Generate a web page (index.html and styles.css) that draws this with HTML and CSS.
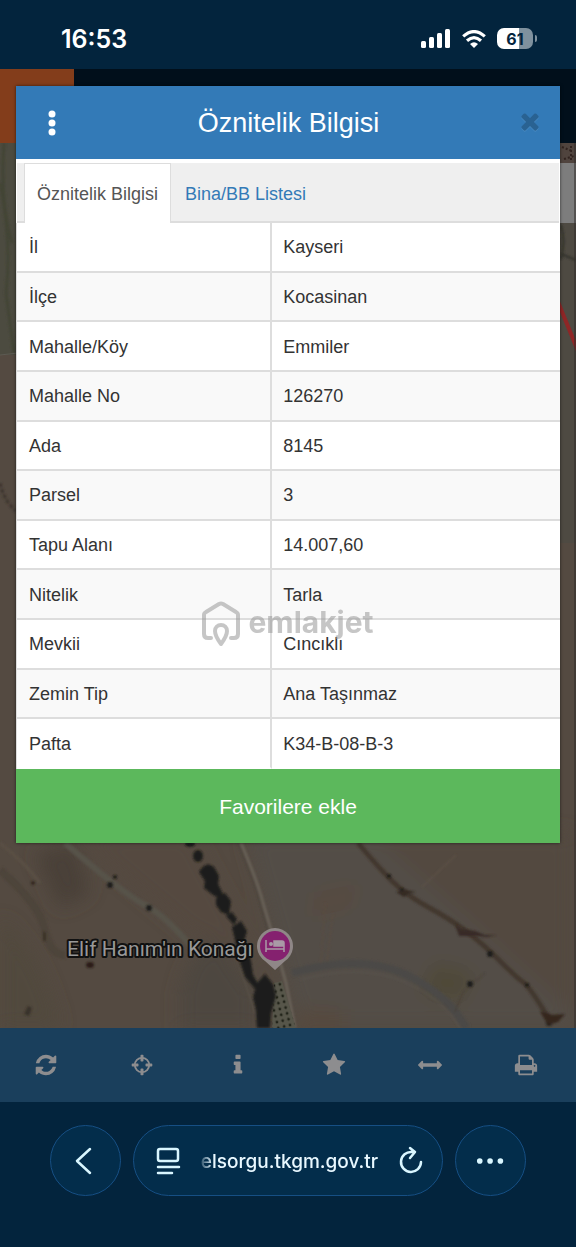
FILE: index.html
```html
<!DOCTYPE html>
<html lang="tr">
<head>
    <meta charset="UTF-8">
    <meta name="viewport" content="width=device-width, initial-scale=1.0">
    <title>Parsel Sorgu - Öznitelik Bilgisi</title>
    <link rel="stylesheet" href="styles.css">
</head>
<body>
    <div class="status-bar">
        <span class="time">16:53</span>
        <div class="status-icons">
            <svg width="30" height="20" viewBox="0 0 30 20" fill="#fff">
                <rect x="0" y="12" width="5" height="7" rx="1.5"/>
                <rect x="8" y="8" width="5" height="11" rx="1.5"/>
                <rect x="16" y="4" width="5" height="15" rx="1.5"/>
                <rect x="24" y="0" width="5" height="19" rx="1.5"/>
            </svg>
            <svg width="24" height="18" viewBox="0 0 24 18" fill="none" stroke="#fff" stroke-width="3.2">
                <path d="M1.2 6.4Q12-3.2 22.8 6.4"/>
                <path d="M5 10.8Q12 4.6 19 10.8"/>
                <path d="M12 18l-4-4Q12 10.6 16 14z" fill="#fff" stroke="none"/>
            </svg>
            <div class="battery"><span>61</span></div>
        </div>
    </div>

    <main class="page">
        <div class="site-header"><div class="site-logo"></div></div>

        <svg class="map" viewBox="0 0 576 885">
            <defs>
                <filter id="soft" x="-30%" y="-30%" width="160%" height="160%"><feGaussianBlur stdDeviation="9"/></filter>
                <filter id="edge" x="-10%" y="-10%" width="120%" height="120%"><feGaussianBlur stdDeviation="0.9"/></filter>
                <pattern id="trees" width="6" height="6" patternUnits="userSpaceOnUse" patternTransform="rotate(-14)">
                    <circle cx="2" cy="2" r="1.4" fill="#22241a"/>
                </pattern>
            </defs>
            <rect width="576" height="885" fill="#544a41"/>
            <!-- left and right strips beside the dialog -->
            <path d="M0 0h20v212H0z" fill="#4c4b40"/>
            <path d="M0 40q12 60 6 110l8 60M4 0q-4 60 8 100" stroke="#434436" stroke-width="3" fill="none" filter="url(#edge)"/>
            <path d="M0 212l18-2" stroke="#5d5a52" stroke-width="1"/>
            <path d="M0 340q4 18 16 28" stroke="#3c342d" stroke-width="3" stroke-dasharray="4 2" fill="none" filter="url(#edge)"/>
            <path d="M556 0h20v400h-20z" fill="#4e4a42"/>
            <path d="M560 0h16v24h-16z" fill="#50443e"/>
            <path d="M562 4l10 4m-8 8l10-3m-3-10v14" stroke="#31231f" stroke-width="2" stroke-dasharray="2 2"/>
            <path d="M560 20h16v60h-16z" fill="#7d7d7d"/>
            <path d="M561 82q5 16 0 34m0-5l15 6" stroke="#33332c" stroke-width="2" fill="none" filter="url(#edge)"/>
            <path d="M556 154l22 54" stroke="#8f2626" stroke-width="4"/>

            <!-- fields -->
            <g filter="url(#soft)">
                <path d="M245 690h145l130 110 60 85H300z" fill="#524d47"/>
                <path d="M372 690l90 80 110 100V690z" fill="#534840"/>
                <path d="M35 710l40-10 15 50-30 15z" fill="#4a4038"/>
                <path d="M70 690h120l70 130-70-30z" fill="#54493f"/>
                <path d="M0 775q40 30 60 110H0z" fill="#51493e"/>
                <path d="M180 850q10-50 40-50l35 50v35h-75z" fill="#4d4741"/>
                <path d="M435 820l40 10-15 30-40-10z" fill="#504a39"/>
                <path d="M315 750l45-10-10 25-40 10z" fill="#574b3f"/>
                <path d="M305 865l40 5v15h-50z" fill="#564a3e"/>
            </g>
            <g fill="none" filter="url(#edge)">
                <path d="M0 727q40 35 45 60t20 25" stroke="#4d443a" stroke-width="8"/>
                <path d="M0 700q25 20 40 40" stroke="#5a5045" stroke-width="3"/>
                <path d="M65 700q60 52 80 62t52 48" stroke="#57524a" stroke-width="6"/>
                <path d="M241 700q17 40 22 60l9 30 14 50 9 45" stroke="#686057" stroke-width="3"/>
                <path d="M238 700q17 40 22 60l9 30" stroke="#443d36" stroke-width="1"/>
                <path d="M292 830q70-20 115 2 40 20 56 48l4 5" stroke="#4b4a46" stroke-width="8"/>
                <path d="M300 837q60-17 105 2 40 18 55 46" stroke="#5a554e" stroke-width="1"/>
                <path d="M358 700q20 24 34 38t36 26 38 24 33 29 24 22 26 37" stroke="#43372f" stroke-width="5"/>
                <path d="M422 744l34-32" stroke="#64584d" stroke-width="1"/>
                <path d="M485 830l-22 19-8 20" stroke="#463c33" stroke-width="1"/>
                <path d="M325 760l-4 60M333 770l-6 48" stroke="#5b4c40" stroke-width="1"/>
                <path d="M240 825l15 45" stroke="#5a534a" stroke-width="1"/>
            </g>
            <path d="M274 840l8-2 14 47h-24z" fill="#57564a"/>
            <path d="M274 840l8-2 14 47h-24z" fill="url(#trees)"/>
            <g fill="#1e1f1a" filter="url(#edge)">
                <ellipse cx="190" cy="701" rx="5" ry="3"/>
                <ellipse cx="198" cy="713" rx="5" ry="6"/>
                <path d="M199 729q7-12 15-5l5 9-1 8 5 10-2 5-8-4-9-7 1-7z"/>
                <path d="M216 755l9-5 6 8-2 14-8-3-5-7z"/>
                <path d="M226 773l6-4 5 7-3 6z"/>
                <path d="M232 784l9-6 6 10-3 10 6 14 3 20 7 12-5 2-10-12-5-15-5-22z"/>
                <path d="M257 840l8-9 8 10 3 12-5 17-1 15h-13l-1-18-3-13z"/>
                <circle cx="110" cy="742" r="3"/><circle cx="115" cy="734" r="2"/>
                <circle cx="149" cy="765" r="3"/><ellipse cx="90" cy="822" rx="4" ry="3" fill="#2c1c16"/>
                <circle cx="33" cy="740" r="2" fill="#302820"/>
                <path d="M43 788l3 2v8h-3z" fill="#3a3028"/>
                <path d="M28 863l4 2-3 8-5-2z" fill="#383229"/>
                <circle cx="389" cy="733" r="2"/><circle cx="402" cy="747" r="2"/>
                <path d="M396 749l9-2 11 2-8 2-4 3z" fill="#352a24"/>
                <path d="M455 781l6 5 14 2 10 4h12l-10 2-10-1-18 0z" fill="#372c25"/>
                <circle cx="490" cy="811" r="3"/><circle cx="470" cy="841" r="3"/>
                <circle cx="527" cy="842" r="2"/><circle cx="549" cy="880" r="3"/>
                <path d="M540 868l12 4 13-1-7 8-10 3z" fill="#35271f"/>
            </g>
            <path d="M575 0v885" stroke="#2e2b28" stroke-width="1"/>
            <!-- place marker -->
            <path d="M275 827l-10-9a18 18 0 1 1 20 0z" fill="#8f8787"/>
            <circle cx="275" cy="803" r="15" fill="#85216f"/>
            <path d="M266 797v12M266 806h18M284 809v-6M274 803h10v-3q0-2-2-2h-8z" stroke="#a99aa6" stroke-width="1.5" fill="#a99aa6"/>
            <circle cx="271" cy="801" r="2" fill="#a99aa6"/>
            <text class="place-name" x="67" y="813">Elif Hanım'ın Konağı</text>
        </svg>

        <nav class="toolbar">
            <button aria-label="Yenile"><svg viewBox="0 0 1792 1792"><path transform="translate(128)" d="M1511 1056q0 5-1 7-64 268-268 434.5t-478 166.5q-146 0-282.5-55t-243.5-157l-129 129q-19 19-45 19t-45-19-19-45v-448q0-26 19-45t45-19h448q26 0 45 19t19 45-19 45l-137 137q71 66 161 102t187 36q134 0 250-65t186-179q11-17 53-117 8-23 30-23h192q13 0 22.5 9.5t9.5 22.5zm25-800v448q0 26-19 45t-45 19h-448q-26 0-45-19t-19-45 19-45l138-138q-148-137-349-137-134 0-250 65t-186 179q-11 17-53 117-8 23-30 23h-199q-13 0-22.5-9.5t-9.5-22.5v-7q65-268 270-434.5t480-166.5q146 0 284 55.5t245 156.5l130-129q19-19 45-19t45 19 19 45z"/></svg></button>
            <button aria-label="Konum"><svg viewBox="0 0 24 24"><path d="M19.2 12a7.2 7.2 0 1 1-14.4 0 7.2 7.2 0 0 1 14.4 0z" fill="none" stroke="#8d8d8f" stroke-width="1.8"/><path d="M10.500 2.500q0-.8.8-.8h1.400q.8 0 .8.8v5.200q0 .8-.8.8h-1.400q-.8 0-.8-.8zM10.500 16.300q0-.8.8-.8h1.400q.8 0 .8.8v5.200q0 .8-.8.8h-1.400q-.8 0-.8-.8zM2.500 10.500q-.8 0-.8.8v1.400q0 .8.8.8h5.200q.8 0 .8-.8v-1.400q0-.8-.8-.8zM16.300 10.500q-.8 0-.8.8v1.400q0 .8.8.8h5.200q.8 0 .8-.8v-1.400q0-.8-.8-.8z"/></svg></button>
            <button aria-label="Bilgi"><svg viewBox="0 0 1792 1792"><path d="M1216 1344v128q0 26-19 45t-45 19h-512q-26 0-45-19t-19-45v-128q0-26 19-45t45-19h64v-384h-64q-26 0-45-19t-19-45v-128q0-26 19-45t45-19h384q26 0 45 19t19 45v576h64q26 0 45 19t19 45zm-128-1152v192q0 26-19 45t-45 19h-256q-26 0-45-19t-19-45v-192q0-26 19-45t45-19h256q26 0 45 19t19 45z"/></svg></button>
            <button aria-label="Favoriler"><svg viewBox="0 0 1792 1792"><path d="M1728 647q0 22-26 48l-363 354 86 500q1 7 1 20 0 21-10.5 35.5t-30.5 14.5q-19 0-40-12l-449-236-449 236q-22 12-40 12-21 0-31.5-14.5t-10.5-35.5q0-6 2-20l86-500-364-354q-25-27-25-48 0-37 56-46l502-73 225-455q19-41 49-41t49 41l225 455 502 73q56 9 56 46z"/></svg></button>
            <button aria-label="Ölçüm"><svg viewBox="0 0 1792 1792"><path d="M1792 896q0 26-19 45l-256 256q-19 19-45 19t-45-19-19-45v-128h-1024v128q0 26-19 45t-45 19-45-19l-256-256q-19-19-19-45t19-45l256-256q19-19 45-19t45 19 19 45v128h1024v-128q0-26 19-45t45-19 45 19l256 256q19 19 19 45z"/></svg></button>
            <button aria-label="Yazdır"><svg viewBox="0 0 1792 1792"><path d="M448 1536h896v-256h-896v256zm0-640h896v-384h-160q-40 0-68-28t-28-68v-160h-640v640zm1152 64q0-26-19-45t-45-19-45 19-19 45 19 45 45 19 45-19 19-45zm128 0v416q0 13-9.5 22.5t-22.5 9.5h-224v160q0 40-28 68t-68 28h-960q-40 0-68-28t-28-68v-160h-224q-13 0-22.5-9.5t-9.5-22.5v-416q0-79 56.5-135.5t135.5-56.5h64v-544q0-40 28-68t68-28h672q40 0 88 20t76 48l152 152q28 28 48 76t20 88v256h64q79 0 135.5 56.5t56.5 135.5z"/></svg></button>
        </nav>

        <section class="modal" role="dialog" aria-labelledby="modalTitle">
            <header class="modal-header">
                <button aria-label="Menü"><svg width="24" height="28" viewBox="0 0 24 28" fill="#fff"><circle cx="12" cy="5" r="3.500"/><circle cx="12" cy="14" r="3.500"/><circle cx="12" cy="23" r="3.500"/></svg></button>
                <h1 id="modalTitle">Öznitelik Bilgisi</h1>
                <button class="close" aria-label="Kapat"><svg width="26" height="26" viewBox="0 128 1792 1792"><path d="M1490 1322q0 40-28 68l-136 136q-28 28-68 28t-68-28l-294-294-294 294q-28 28-68 28t-68-28l-136-136q-28-28-28-68t28-68l294-294-294-294q-28-28-28-68t28-68l136-136q28-28 68-28t68 28l294 294 294-294q28-28 68-28t68 28l136 136q28 28 28 68t-28 68l-294 294 294 294q28 28 28 68z"/></svg></button>
            </header>
            <div class="tabs">
                <a href="#oznitelik" class="active">Öznitelik Bilgisi</a>
                <a href="#bina">Bina/BB Listesi</a>
            </div>
            <table id="oznitelik">
                <tbody>
                    <tr><th scope="row">İl</th><td>Kayseri</td></tr>
                    <tr><th scope="row">İlçe</th><td>Kocasinan</td></tr>
                    <tr><th scope="row">Mahalle/Köy</th><td>Emmiler</td></tr>
                    <tr><th scope="row">Mahalle No</th><td>126270</td></tr>
                    <tr><th scope="row">Ada</th><td>8145</td></tr>
                    <tr><th scope="row">Parsel</th><td>3</td></tr>
                    <tr><th scope="row">Tapu Alanı</th><td>14.007,60</td></tr>
                    <tr><th scope="row">Nitelik</th><td>Tarla</td></tr>
                    <tr><th scope="row">Mevkii</th><td>Cıncıklı</td></tr>
                    <tr><th scope="row">Zemin Tip</th><td>Ana Taşınmaz</td></tr>
                    <tr><th scope="row">Pafta</th><td>K34-B-08-B-3</td></tr>
                </tbody>
            </table>
            <button class="favorite">Favorilere ekle</button>
        </section>
    </main>

    <footer class="browser-bar">
        <button class="round" aria-label="Geri"><svg width="24" height="30" viewBox="0 0 24 30"><path d="M16 3L3 15l13 12"/></svg></button>
        <div class="address">
            <button aria-label="Sayfa menüsü"><svg width="26" height="30" viewBox="0 0 26 30"><rect x="3" y="3" width="20" height="12" rx="2"/><path d="M3 21h21M3 27h14"/></svg></button>
            <span class="url">elsorgu.tkgm.gov.tr</span>
            <button aria-label="Sayfayı yenile"><svg width="26" height="30" viewBox="0 0 26 30"><path d="M14 6A10 10 0 1 0 23 16M12 2l5 4-5 6"/></svg></button>
        </div>
        <button class="round" aria-label="Diğer"><svg class="dots" width="32" height="8" viewBox="0 0 32 8"><circle cx="4" cy="4" r="3"/><circle cx="15" cy="4" r="3"/><circle cx="26" cy="4" r="3"/></svg></button>
    </footer>

    <div class="watermark">
        <svg width="38" height="46" viewBox="0 0 38 46" fill="none" stroke="currentColor" stroke-width="4" stroke-linecap="round" stroke-linejoin="round">
            <path d="M9 37H6q-4 0-4-4V14q0-2 2-3L17 3q2-1 4 0l13 8q2 1 2 3v19q0 4-4 4h-3"/>
            <path d="M19 43q-6-8-6-13a6 6 0 0 1 12 0q0 5-6 13z"/>
        </svg>
        <span>emlakjet</span>
    </div>
</body>
</html>
```
FILE: styles.css
```css
* {
    box-sizing: border-box;
}
body {
    position: relative;
    min-height: 100vh;
    margin: 0;
    font-family: "Liberation Sans", Arial, sans-serif;
    font-size: 18px;
    color: #333;
    background-color: #03243d;
}
button {
    display: flex;
    align-items: center;
    justify-content: center;
    padding: 0;
    border: none;
    background: none;
    cursor: pointer;
}

/* Status bar */
.status-bar {
    display: flex;
    align-items: center;
    justify-content: space-between;
    height: 69px;
    padding: 8px 43px 0 61px;
    font-family: Inter, sans-serif;
    color: #fff;
}
.time {
    font-size: 25px;
    font-weight: 600;
}
.status-icons {
    display: flex;
    align-items: center;
    gap: 11px;
}
.battery {
    position: relative;
    display: flex;
    align-items: center;
    justify-content: center;
    width: 36px;
    height: 21px;
    border-radius: 7px;
    background: linear-gradient(to right, #fff 61%, #7f919e 61%);
    font-size: 16px;
    font-weight: 700;
    color: #03243d;
}
.battery::after {
    content: "";
    position: absolute;
    right: -4px;
    top: 7px;
    width: 2px;
    height: 7px;
    border-radius: 0 2px 2px 0;
    background-color: #7f919e;
}

/* Page behind the dialog */
.page {
    position: relative;
}
.site-header {
    height: 74px;
    background-color: #010f1b;
}
.site-logo {
    width: 74px;
    height: 74px;
    background-color: #833d1b;
}
.map {
    display: block;
    width: 100%;
}
.place-name {
    font-family: Roboto, sans-serif;
    font-size: 21px;
    fill: #989898;
    stroke: #111;
    stroke-width: 4px;
    stroke-linejoin: round;
    paint-order: stroke;
}
.toolbar {
    display: grid;
    grid-template-columns: repeat(6, 1fr);
    height: 74px;
    background-color: #1a3f5c;
}
.toolbar button {
    padding-right: 4px;
}
.toolbar svg {
    width: 24px;
    height: 24px;
    fill: #8d8d8f;
}

/* Dialog */
.modal {
    position: absolute;
    top: 17px;
    left: 16px;
    right: 16px;
    background-color: #fff;
    box-shadow: 0 0 3px rgba(0,0,0,0.6);
}
.modal-header {
    display: flex;
    align-items: center;
    justify-content: space-between;
    height: 73px;
    padding: 0 17px 0 24px;
    background-color: #337ab7;
}
.modal-header h1 {
    margin: 0;
    padding: 2px 4px 0 0;
    font-size: 27px;
    font-weight: normal;
    color: #fff;
}
.close svg {
    fill: #296292;
    filter: drop-shadow(0 1px 0 #4788bf);
}
.tabs {
    display: flex;
    height: 60px;
    margin: 4px 1px 0;
    padding: 0 7px;
    border-bottom: 2px solid #ddd;
    background-color: #efefef;
}
.tabs a {
    height: 60px;
    margin-right: 1px;
    padding: 0 12px;
    border: 1px solid transparent;
    line-height: 60px;
    color: #337ab7;
    text-decoration: none;
}
.tabs .active {
    border-color: #ddd;
    border-bottom: none;
    background-color: #fff;
    color: #555;
}
table {
    width: 100%;
    height: 546px;
    border-collapse: separate;
    border-spacing: 0;
    border-left: 1px solid #ddd;
}
th, td {
    padding: 2px 11px 0;
    border-bottom: 2px solid #ddd;
    font-weight: normal;
    text-align: left;
}
th {
    width: 47%;
    padding-left: 12px;
    border-right: 2px solid #ddd;
}
tr:nth-child(even) {
    background-color: #f9f9f9;
}
tr:last-child > * {
    border-bottom-color: #fff;
}
.favorite {
    width: 100%;
    height: 74px;
    padding-top: 2px;
    background-color: #5cb85c;
    font-family: inherit;
    font-size: 21px;
    color: #fff;
}

/* Browser bar */
.browser-bar {
    display: flex;
    justify-content: center;
    gap: 12px;
    height: 145px;
    padding: 23px 50px 0;
}
.round, .address {
    height: 71px;
    border: 1px solid #164f84;
    border-radius: 36px;
    background-color: #032d4b;
}
.round {
    flex: 0 0 71px;
}
.address {
    display: flex;
    flex: 1;
    align-items: center;
    justify-content: space-between;
    padding: 0 18px 0 21px;
}
.browser-bar svg {
    fill: none;
    stroke: #d9f6ff;
    stroke-width: 2.5;
    stroke-linecap: round;
    stroke-linejoin: round;
}
.browser-bar .dots {
    width: 30px;
    fill: #d9f6ff;
    stroke: none;
}
.url {
    padding-top: 2px;
    font-family: Inter, sans-serif;
    font-size: 19px;
    font-weight: 500;
    color: #e9f8ff;
    mask-image: linear-gradient(to right, rgba(0,0,0,0.2), #000 12px);
}

.watermark {
    position: absolute;
    inset: 0;
    display: flex;
    align-items: center;
    justify-content: center;
    gap: 8px;
    font-family: Inter, sans-serif;
    font-size: 30px;
    font-weight: 700;
    line-height: 24px;
    color: #999;
    opacity: 0.55;
    pointer-events: none;
}
.watermark span {
    padding-bottom: 4px;
}
```
